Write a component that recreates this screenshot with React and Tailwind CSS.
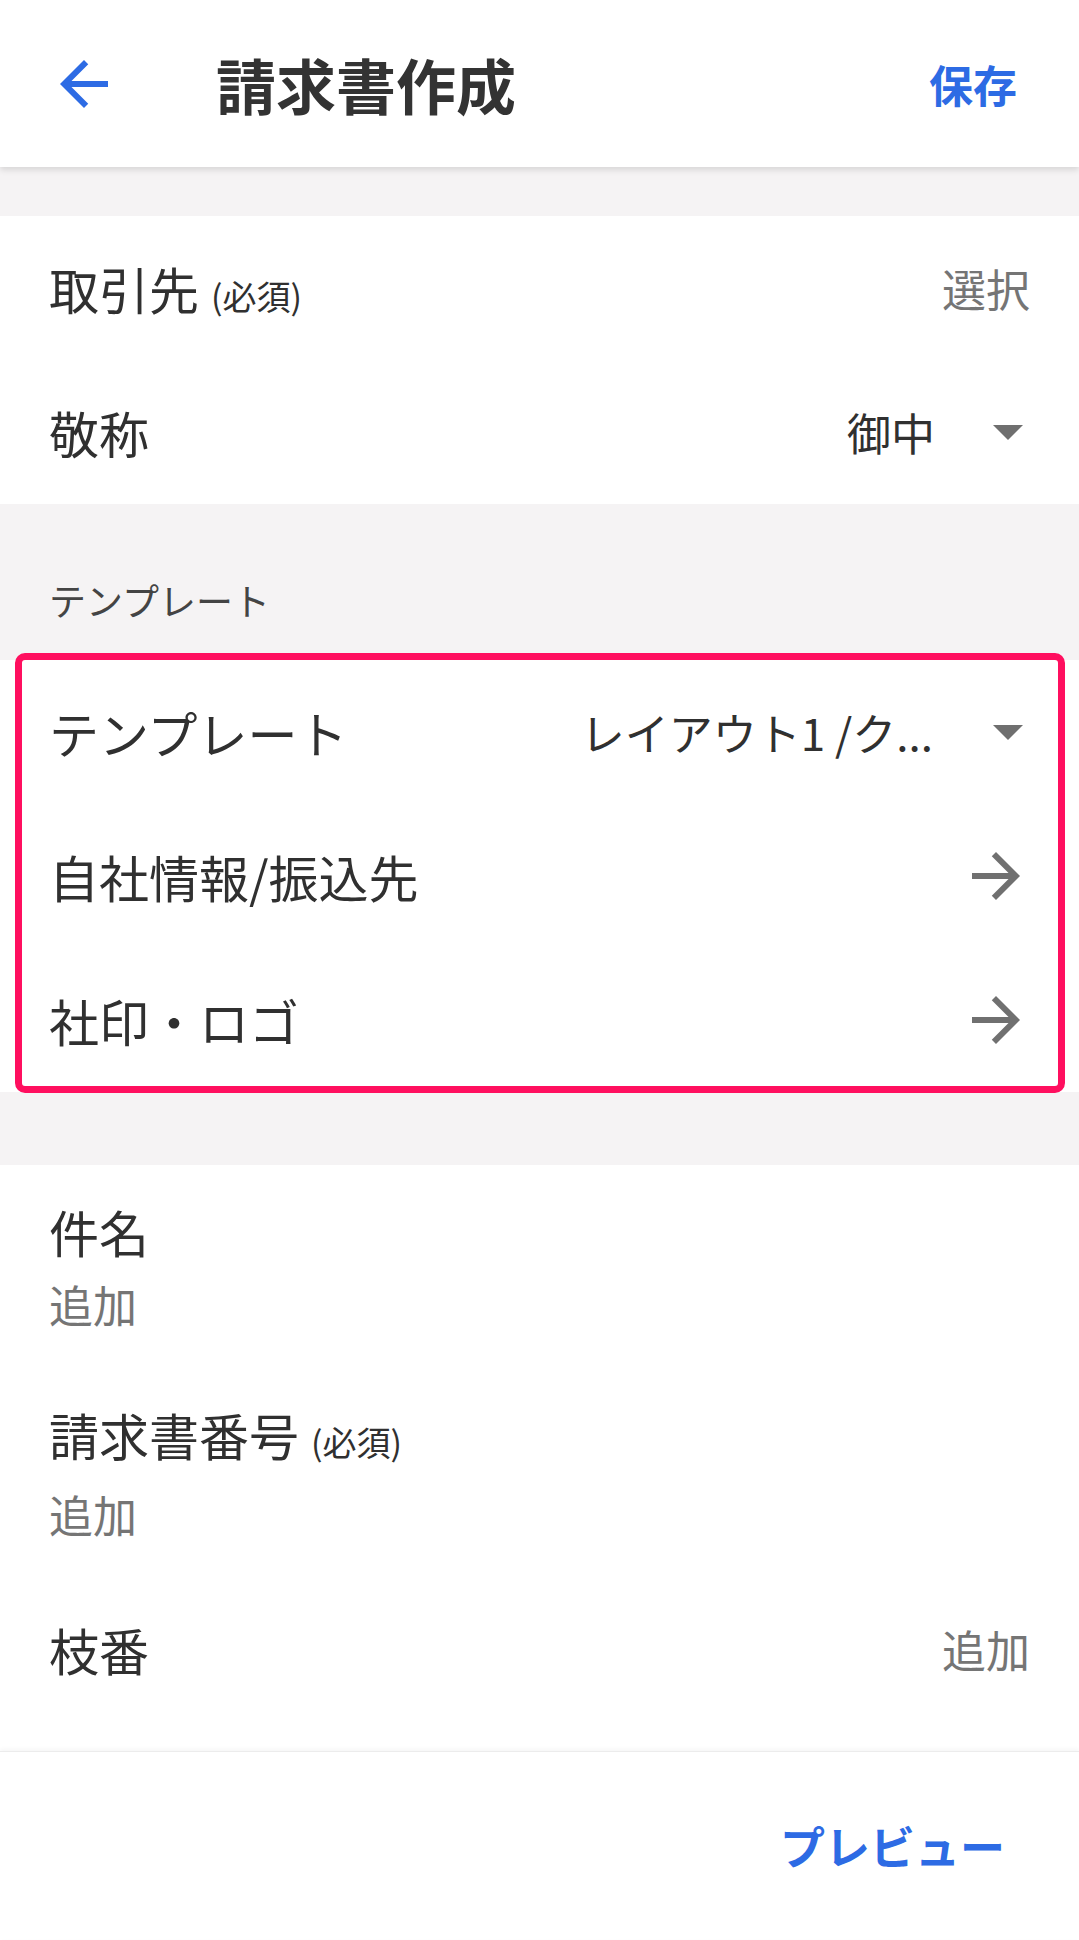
import React from 'react';

const FONT = { fontFamily: '"Noto Sans CJK JP", "Noto Sans", sans-serif' };

function DropTriangle() {
  return (
    <svg className="w-[30px] h-[15px] shrink-0" viewBox="7 10 10 5" fill="#6f6f6f">
      <path d="M7 10l5 5 5-5z" />
    </svg>
  );
}

function ArrowRight() {
  return (
    <svg className="w-[48px] h-[48px] shrink-0" viewBox="4 4 16 16" fill="#707070">
      <path d="M12 4l-1.41 1.41L16.17 11H4v2h12.17l-5.58 5.59L12 20l8-8z" />
    </svg>
  );
}

export default function App() {
  return (
    <div className="w-full min-h-[1940px] bg-white flex flex-col text-[#303030]" style={FONT}>
      {/* app bar */}
      <header className="relative z-10 h-[167px] bg-white flex items-center shadow-[0_3px_6px_rgba(0,0,0,0.12)]">
        <svg className="ml-[60px] w-[48px] h-[48px]" viewBox="4 4 16 16" fill="#2d6be4">
          <path d="M20 11H7.83l5.59-5.59L12 4l-8 8 8 8 1.41-1.41L7.83 13H20v-2z" />
        </svg>
        <h1 className="ml-[108px] text-[60px] font-bold leading-none text-[#333333]">請求書作成</h1>
        <span className="ml-auto mr-[62px] text-[44px] font-bold leading-none text-[#2d6be4]">保存</span>
      </header>

      <div className="h-[49px] bg-[#f5f3f4]" />

      {/* customer */}
      <section className="bg-white">
        <div className="h-[144px] px-[49px] flex items-center justify-between">
          <div className="flex items-baseline">
            <span className="text-[50px] leading-none">取引先</span>
            <span className="ml-[12px] text-[34px] leading-none">(必須)</span>
          </div>
          <span className="text-[44px] leading-none text-[#757575]">選択</span>
        </div>
        <div className="h-[144px] px-[49px] flex items-center justify-between">
          <span className="text-[50px] leading-none">敬称</span>
          <div className="flex items-center gap-[58px] mr-[7px]">
            <span className="text-[44px] leading-none">御中</span>
            <DropTriangle />
          </div>
        </div>
      </section>

      <div className="h-[156px] bg-[#f5f3f4] px-[49px] flex items-center pt-[36px]">
        <span className="text-[37px] leading-none text-[#444444]">テンプレート</span>
      </div>

      {/* template settings, highlighted */}
      <section className="relative bg-white">
        <div className="h-[144px] px-[49px] flex items-center justify-between">
          <span className="text-[50px] leading-none">テンプレート</span>
          <div className="flex items-center gap-[60px] mr-[7px]">
            <span className="text-[44px] leading-none">レイアウト1 /ク...</span>
            <DropTriangle />
          </div>
        </div>
        <div className="h-[144px] px-[49px] flex items-center justify-between">
          <span className="text-[50px] leading-none">自社情報/振込先</span>
          <div className="mr-[10px]"><ArrowRight /></div>
        </div>
        <div className="h-[144px] px-[49px] flex items-center justify-between">
          <span className="text-[50px] leading-none">社印・ロゴ</span>
          <div className="mr-[10px]"><ArrowRight /></div>
        </div>
        <div className="absolute -top-[7px] -bottom-[1px] left-[15px] right-[14px] border-[7px] border-[#ff0f5f] rounded-[10px] pointer-events-none" />
      </section>

      <div className="h-[73px] bg-[#f5f3f4]" />

      {/* invoice details */}
      <section className="bg-white">
        <div className="h-[206px] px-[49px] flex flex-col justify-center">
          <span className="text-[50px] leading-[72px]">件名</span>
          <span className="text-[44px] leading-[74px] text-[#757575]">追加</span>
        </div>
        <div className="h-[206px] px-[49px] flex flex-col justify-center">
          <div className="flex items-baseline leading-[72px]">
            <span className="text-[50px]">請求書番号</span>
            <span className="ml-[12px] text-[34px]">(必須)</span>
          </div>
          <span className="text-[44px] leading-[72px] text-[#757575]">追加</span>
        </div>
        <div className="h-[144px] px-[49px] flex items-center justify-between">
          <span className="text-[50px] leading-none">枝番</span>
          <span className="text-[44px] leading-none text-[#757575]">追加</span>
        </div>
        <div className="h-[30px]" />
      </section>

      {/* bottom bar */}
      <footer className="h-[188px] bg-white border-t border-[#ececec] shadow-[0_-2px_4px_rgba(0,0,0,0.04)] flex items-center justify-end pr-[74px]">
        <span className="text-[45px] font-bold leading-none text-[#2d6be4]">プレビュー</span>
      </footer>
    </div>
  );
}
